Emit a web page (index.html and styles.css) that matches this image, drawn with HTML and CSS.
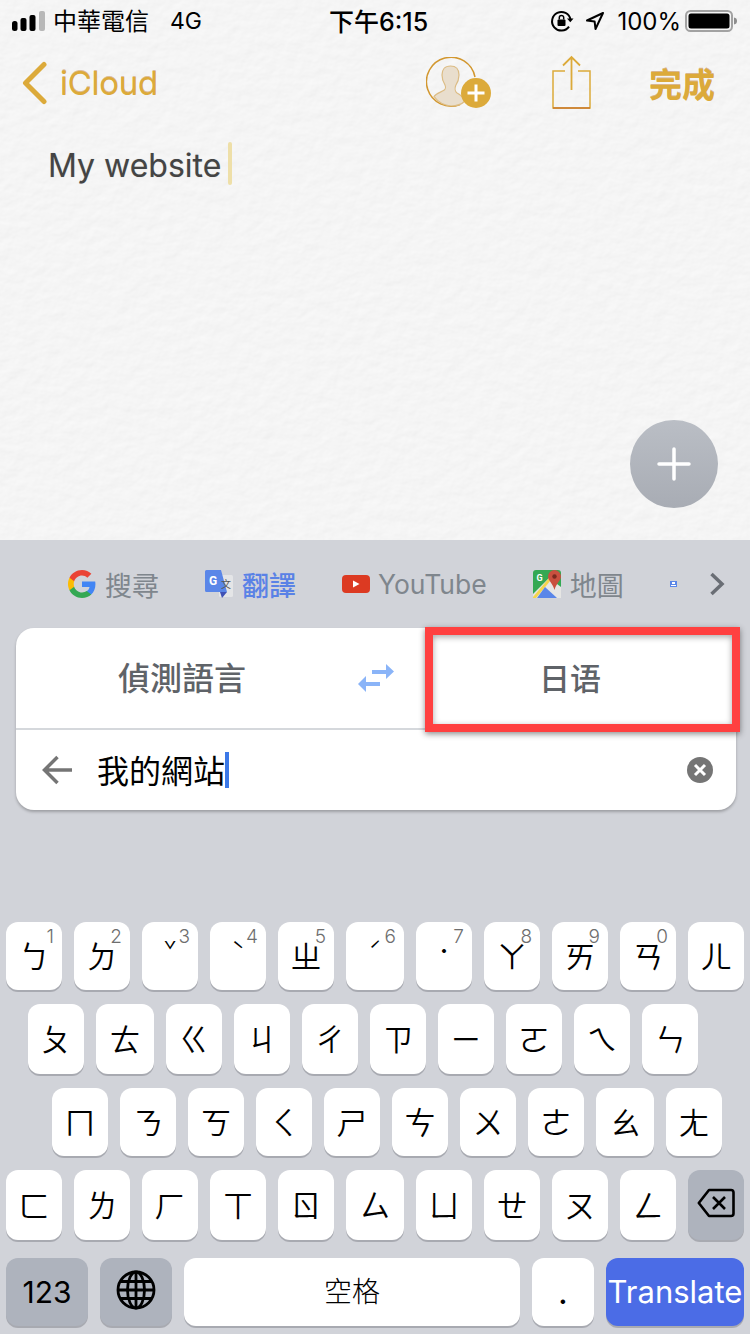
FILE: index.html
```html
<!DOCTYPE html>
<html lang="zh-Hant">
<head>
<meta charset="utf-8">
<title>Notes</title>
<link rel="stylesheet" href="styles.css">
</head>
<body>
<div class="phone">
  <section class="notes">
    <svg class="paper" width="750" height="540" aria-hidden="true">
      <filter id="paperTex" x="0" y="0" width="100%" height="100%" color-interpolation-filters="sRGB">
        <feTurbulence type="fractalNoise" baseFrequency="0.07 0.085" numOctaves="3" seed="11" result="n"/>
        <feDiffuseLighting in="n" surfaceScale="0.26" diffuseConstant="1.03" lighting-color="#f6f6f6">
          <feDistantLight azimuth="60" elevation="75"/>
        </feDiffuseLighting>
      </filter>
      <rect width="750" height="540" filter="url(#paperTex)"/>
    </svg>

    <header class="status">
      <div class="status-left">
        <svg class="signal" width="33" height="22" viewBox="0 0 33 22"><rect x="0" y="11" width="5.500" height="10" rx="2.500" fill="#000"/><rect x="8.500" y="8" width="6" height="13" rx="2" fill="#000"/><rect x="17.500" y="5" width="6" height="16" rx="2" fill="#000"/><rect x="27" y="1" width="6" height="20" rx="2" fill="#b8b8b8"/></svg>
        <span class="carrier">中華電信</span>
        <span class="net">4G</span>
      </div>
      <span class="clock">下午6:15</span>
      <div class="status-right">
        <svg width="24" height="24" viewBox="0 0 24 24" fill="none"><path d="M20.500 10.500A9.300 9.300 0 1 0 19 17.600" stroke="#000" stroke-width="2"/><path d="M17 9.500h6.500l-3.200 3.800z" fill="#000"/><rect x="7.500" y="10.500" width="8" height="6.500" rx="1" fill="#000"/><path d="M9.300 10.500V8.600a2.200 2.200 0 0 1 4.400 0v1.900" stroke="#000" stroke-width="1.500"/></svg>
        <svg class="loc" width="20" height="20" viewBox="0 0 20 20" fill="none"><path d="M18 2 2 9.500l7.600.9.9 7.600z" stroke="#000" stroke-width="2" stroke-linejoin="round"/></svg>
        <span class="pct">100%</span>
        <svg class="batt" width="53" height="24" viewBox="0 0 53 24"><rect x="1" y="2" width="46" height="20" rx="4.500" fill="none" stroke="#a2a2a2" stroke-width="2"/><rect x="3.500" y="4.500" width="41" height="15" rx="2.500" fill="#000"/><path d="M49 8.500c2 .3 3 1.500 3 3.500s-1 3.200-3 3.500z" fill="#8d8d8d"/></svg>
      </div>
    </header>

    <nav class="nav">
      <svg class="chev" width="26" height="44" viewBox="0 0 26 44" fill="none"><path d="M22 3.500 3.500 22 22 40.500" stroke="#dcaa3a" stroke-width="5" stroke-linecap="round" stroke-linejoin="round"/></svg>
      <span class="back">iCloud</span>
      <div class="nav-right">
        <svg class="avatar" width="66" height="52" viewBox="0 0 66 52" fill="none">
          <path d="M34 47.500A24.500 24.500 0 1 1 49 20" stroke="#d2972f" stroke-width="1.500"/>
          <path d="M24.500 9c-6 0-8.500 4-8.500 9 0 4 1 7 3 10 .7 1.500.6 4-.7 5-2.300 1.800-8 3-10.300 6.500A24 24 0 0 0 25 49c6 0 11-2 14-5-2-4-5-6.500-8-8-2-1.500-2.300-5-1.300-7.500 2-3 3.300-6.500 3.300-10.500 0-5-2.500-9-8.500-9z" fill="#e9decd" stroke="#dcbc84" stroke-width="1.200"/>
          <circle cx="50" cy="36" r="15" fill="#dcaa3a"/>
          <path d="M50 27.500v17M41.500 36h17" stroke="#fff" stroke-width="3"/>
        </svg>
        <svg class="share" width="40" height="54" viewBox="0 0 40 54" fill="none"><path d="M13 16H1v37h37V16H26" stroke="#dcaa3a" stroke-width="1.500"/><path d="M1 53h37" stroke="#c8792b" stroke-width="1.500"/><path d="M19.500 35V2M11 10.500 19.500 2 28 10.500" stroke="#dcaa3a" stroke-width="1.800"/></svg>
        <span class="done">完成</span>
      </div>
    </nav>

    <div class="note-body"><span class="note-text">My website</span><i class="note-caret"></i></div>

    <button class="fab" type="button" aria-label="add">
      <svg width="34" height="34" viewBox="0 0 34 34"><path d="M17 2v30M2 17h30" stroke="#fff" stroke-width="3.500" stroke-linecap="round"/></svg>
    </button>
  </section>

  <section class="keyboard">
    <div class="suggest">
      <div class="sg">
        <svg width="28" height="28" viewBox="1 1 22 22"><path fill="#4285F4" d="M22.560 12.250c0-.78-.07-1.530-.2-2.250H12v4.260h5.920c-.26 1.370-1.040 2.530-2.210 3.310v2.770h3.570c2.080-1.920 3.280-4.740 3.280-8.090z"/><path fill="#34A853" d="M12 23c2.970 0 5.460-.98 7.280-2.660l-3.570-2.770c-.98.66-2.230 1.060-3.710 1.060-2.860 0-5.290-1.930-6.160-4.530H2.180v2.840C3.990 20.530 7.700 23 12 23z"/><path fill="#FBBC05" d="M5.840 14.090c-.22-.66-.35-1.360-.35-2.090s.13-1.430.35-2.090V7.070H2.180C1.430 8.550 1 10.220 1 12s.43 3.450 1.180 4.930l2.850-2.220.81-.62z"/><path fill="#EA4335" d="M12 5.380c1.620 0 3.060.56 4.210 1.640l3.150-3.150C17.450 2.090 14.970 1 12 1 7.700 1 3.990 3.470 2.180 7.070l3.660 2.840c.87-2.600 3.300-4.530 6.160-4.530z"/></svg>
        <span>搜尋</span>
      </div>
      <div class="sg sg-on">
        <svg width="28" height="28" viewBox="0 0 28 28"><rect x="14" y="5" width="14" height="22" rx="1.500" fill="#e4e5e7"/><path d="M1.500 0H16l6 22H1.500A1.500 1.500 0 0 1 0 20.500V1.500A1.500 1.500 0 0 1 1.500 0z" fill="#5a86e8"/><path d="M15 22h7l-5 6z" fill="#3f51b5"/><text x="4" y="14.500" class="tr-g">G</text><text x="16" y="18" class="tr-w">文</text></svg>
        <span>翻譯</span>
      </div>
      <div class="sg sg-yt">
        <svg width="28" height="18" viewBox="0 0 28 18"><rect width="28" height="18" rx="4" fill="#dc3a22"/><path d="M11 5.500v7l6.500-3.500z" fill="#fff"/></svg>
        <span>YouTube</span>
      </div>
      <div class="sg">
        <svg width="28" height="28" viewBox="0 0 28 28"><rect width="28" height="28" rx="3" fill="#34a853"/><path d="M0 28V24L16 8l12 9v11z" fill="#e6e6e4"/><path d="M0 27 16 8l2 2L3 28H0z" fill="#f4d44d"/><path d="M4 28l8-11 12 11z" fill="#5a86e8"/><path d="M21.500 0a6.500 6.500 0 0 0-6.500 6.500c0 4 5 7 6.500 13.500 1.500-6.500 6.500-9.500 6.500-13.500A6.500 6.500 0 0 0 21.500 0z" fill="#c9503f"/><circle cx="21.500" cy="6.500" r="2.200" fill="#7a2a20"/><text x="3.500" y="11" class="map-g">G</text></svg>
        <span>地圖</span>
      </div>
      <svg class="tiny" width="7" height="6" viewBox="0 0 7 6"><rect width="7" height="6" fill="#5a86e8"/><rect x="2" y="1" width="3" height="2" fill="#fff"/><rect x="1" y="4" width="5" height="1" fill="#fff"/></svg>
      <svg class="sg-next" width="16" height="24" viewBox="0 0 16 24" fill="none"><path d="M2.500 2 13 12 2.500 22" stroke="#6a6e75" stroke-width="3.500"/></svg>
    </div>

    <div class="card">
      <div class="langs">
        <span class="lang">偵測語言</span>
        <span class="swap">
          <svg width="36" height="28" viewBox="0 0 36 28"><path d="M28 0l8 7.500-8 7.500v-5H14V6h14z" fill="#8ab4f8"/><path d="M8 12 0 20l8 8v-6h14v-4H8z" fill="#8ab4f8"/></svg>
        </span>
        <span class="lang lang-sc">日语</span>
        <div class="mark"></div>
      </div>
      <div class="entry">
        <svg class="entry-back" width="30" height="30" viewBox="0 0 30 30" fill="none"><path d="M30 15H3M15.500 2 2.500 15l13 13" stroke="#757575" stroke-width="3.500"/></svg>
        <span class="entry-text">我的網站</span><i class="entry-caret"></i>
        <svg class="entry-x" width="26" height="26" viewBox="0 0 26 26"><circle cx="13" cy="13" r="13" fill="#757575"/><path d="M8 8l10 10M18 8 8 18" stroke="#fff" stroke-width="3"/></svg>
      </div>
    </div>

    <div class="keys">
      <div class="row row-1 h68">
        <div class="key">ㄅ<sup>1</sup></div><div class="key">ㄉ<sup>2</sup></div><div class="key tone">ˇ<sup>3</sup></div><div class="key tone">ˋ<sup>4</sup></div><div class="key">ㄓ<sup>5</sup></div><div class="key wide tone">ˊ<sup>6</sup></div><div class="key tone">˙<sup>7</sup></div><div class="key">ㄚ<sup>8</sup></div><div class="key">ㄞ<sup>9</sup></div><div class="key">ㄢ<sup>0</sup></div><div class="key">ㄦ</div>
      </div>
      <div class="row row-2 h70">
        <div class="key">ㄆ</div><div class="key wide">ㄊ</div><div class="key">ㄍ</div><div class="key">ㄐ</div><div class="key">ㄔ</div><div class="key">ㄗ</div><div class="key">ㄧ</div><div class="key">ㄛ</div><div class="key">ㄟ</div><div class="key">ㄣ</div>
      </div>
      <div class="row row-3 h68">
        <div class="key">ㄇ</div><div class="key">ㄋ</div><div class="key">ㄎ</div><div class="key">ㄑ</div><div class="key">ㄕ</div><div class="key">ㄘ</div><div class="key">ㄨ</div><div class="key">ㄜ</div><div class="key wide">ㄠ</div><div class="key">ㄤ</div>
      </div>
      <div class="row row-1 h70">
        <div class="key">ㄈ</div><div class="key">ㄌ</div><div class="key">ㄏ</div><div class="key">ㄒ</div><div class="key">ㄖ</div><div class="key wide">ㄙ</div><div class="key">ㄩ</div><div class="key">ㄝ</div><div class="key">ㄡ</div><div class="key">ㄥ</div>
        <div class="key fn">
          <svg width="38" height="30" viewBox="0 0 38 30" fill="none"><path d="M12 2h22a2.500 2.500 0 0 1 2.500 2.500v21A2.500 2.500 0 0 1 34 28H12L1.800 15z" stroke="#000" stroke-width="2.600" stroke-linejoin="round"/><path d="M16 9l12 12M28 9 16 21" stroke="#000" stroke-width="2.600"/></svg>
        </div>
      </div>
      <div class="row row-1 h68 last">
        <div class="key fn k123">123</div>
        <div class="key fn kglobe">
          <svg width="40" height="40" viewBox="0 0 40 40" fill="none" stroke="#000" stroke-width="2.800"><circle cx="20" cy="20" r="18"/><ellipse cx="20" cy="20" rx="8.500" ry="18"/><path d="M2 20h36M5 11.500h30M5 28.500h30M20 2v36"/></svg>
        </div>
        <div class="key kspace">空格</div>
        <div class="key kdot">.</div>
        <div class="key kgo">Translate</div>
      </div>
    </div>
  </section>
</div>
</body>
</html>
```

FILE: styles.css
```css
* { box-sizing: border-box; }
html, body { margin: 0; padding: 0; }
body { font-family: Inter, "Noto Sans CJK TC", sans-serif; color: #000; }

.phone { width: 750px; height: 1334px; display: flex; flex-direction: column; overflow: hidden; }

/* notes */
.notes { position: relative; height: 540px; background: #f5f5f5; overflow: hidden; }
.paper { position: absolute; left: 0; top: 0; }

.status { position: relative; height: 42px; display: flex; align-items: center; padding: 0 12px; font-size: 24px; }
.status-left { display: flex; align-items: center; width: 317px; flex: none; }
.signal { flex: none; }
.carrier { margin: 0 0 3px 8px; font-family: "Noto Sans CJK TC", sans-serif; font-size: 24px; }
.net { margin-left: 21px; font-size: 23px; }
.clock { margin-bottom: 2px; font-size: 25px; font-weight: 500; white-space: nowrap; }
.status-right { margin-left: auto; display: flex; align-items: center; }
.status-right .loc { margin-left: 11px; }
.pct { margin-left: 12px; font-size: 24px; }
.batt { margin-left: 4px; }

.nav { position: relative; height: 86px; display: flex; align-items: center; padding: 0 35px 4px 22px; color: #dcaa3a; }
.back { margin-left: 12px; font-size: 33px; letter-spacing: -0.3px; text-shadow: 0 -1px 0 rgba(190,120,40,.45); }
.nav-right { margin-left: auto; display: flex; align-items: center; }
.avatar { flex: none; }
.share { flex: none; margin-left: 60px; margin-top: -2px; }
.done { margin-left: 57px; font-family: "Noto Sans CJK TC", sans-serif; font-weight: 700; font-size: 33px; text-shadow: 0 -1px 0 rgba(190,120,40,.5); }

.note-body { position: relative; display: flex; align-items: center; padding: 14px 0 0 48px; height: 57px; }
.note-text { margin-top: 4px; font-size: 32px; color: #444; text-shadow: 0 0 1px rgba(0,0,0,.2); }
.note-caret { display: block; width: 4px; height: 43px; margin-left: 7px; background: #eedfa8; border-radius: 2px; }

.fab { position: absolute; left: 630px; top: 420px; width: 88px; height: 88px; padding: 0; border: 0; border-radius: 50%; background: linear-gradient(#babec5, #a8acb4); display: flex; align-items: center; justify-content: center; }

/* keyboard */
.keyboard { flex: 1; background: #d1d3d9; display: flex; flex-direction: column; }

.suggest { height: 88px; display: flex; align-items: center; gap: 46px; padding: 0 0 0 68px; color: #7f868d; }
.sg { flex: none; display: flex; align-items: center; gap: 9px; font-size: 27px; white-space: nowrap; }
.sg svg { flex: none; }
.sg-on { color: #5a82e6; font-weight: 500; }
.sg-yt { gap: 8px; font-size: 26.500px; }
.tr-g { font: 700 12px Roboto, sans-serif; fill: #fff; }
.tr-w { font: 400 10px "Noto Sans CJK SC", sans-serif; fill: #555; }
.map-g { font: 700 9px Roboto, sans-serif; fill: #fff; }
.tiny { flex: none; }
.sg-next { flex: none; margin-left: -14px; }

.card { position: relative; margin: 0 14px 0 16px; height: 182px; background: #fff; border-radius: 18px; box-shadow: 0 2px 3px rgba(0,0,0,.25); display: flex; flex-direction: column; }
.langs { position: relative; height: 102px; padding-bottom: 4px; display: grid; grid-template-columns: 332px 56px 332px; align-items: center; border-bottom: 2px solid #d5d8dc; }
.lang { text-align: center; font-family: "Noto Sans CJK TC", sans-serif; font-size: 32px; font-weight: 500; color: #5f6368; }
.lang-sc { font-family: "Noto Sans CJK SC", sans-serif; font-size: 31px; }
.swap { display: flex; justify-content: center; padding-top: 4px; }
.mark { position: absolute; left: 409px; top: -1px; width: 315px; height: 105px; border: 8px solid #ff4040; box-shadow: 0 2px 6px rgba(0,0,0,.45), inset 0 2px 6px rgba(0,0,0,.35); }

.entry { flex: 1; display: flex; align-items: center; padding: 0 23px 0 26px; }
.entry-back { flex: none; }
.entry-text { margin: 0 0 2px 25px; font-family: "Noto Sans CJK TC", sans-serif; font-size: 32px; }
.entry-caret { display: block; width: 4px; height: 36px; background: #3b78e7; }
.entry-x { flex: none; margin-left: auto; }

.keys { margin-top: 112px; display: flex; flex-direction: column; gap: 14px; }
.row { display: flex; gap: 12px; }
.row-1 { padding-left: 6px; }
.row-2 { padding-left: 28px; }
.row-3 { padding-left: 52px; }
.h68 { height: 68px; }
.h70 { height: 70px; }
.last { margin-top: 4px; }

.key { position: relative; flex: none; width: 56px; display: flex; align-items: center; justify-content: center; padding-bottom: 4px; background: #fff; border-radius: 12px; box-shadow: 0 2px 0 #a8aab1; font-family: "Noto Sans CJK TC", sans-serif; font-weight: 350; font-size: 31px; line-height: 1; }
.wide { width: 58px; }
.key sup { position: absolute; top: 5px; right: 8px; font-family: Inter, sans-serif; font-size: 19px; font-weight: 300; line-height: 1; color: #6e6e6e; }
.tone { padding-bottom: 14px; font-size: 22px; }
.fn { background: #aeb3bd; }
.k123 { width: 82px; padding-bottom: 0; font-family: Inter, sans-serif; font-weight: 400; font-size: 30px; }
.kglobe { width: 72px; }
.kspace { width: 336px; font-size: 28px; font-weight: 300; }
.kdot { width: 62px; padding-bottom: 0; font-family: Inter, sans-serif; font-weight: 400; font-size: 34px; }
.kgo { width: 138px; padding-bottom: 2px; background: #4b6ce6; color: #fff; font-family: Inter, sans-serif; font-weight: 400; font-size: 31px; }
```
